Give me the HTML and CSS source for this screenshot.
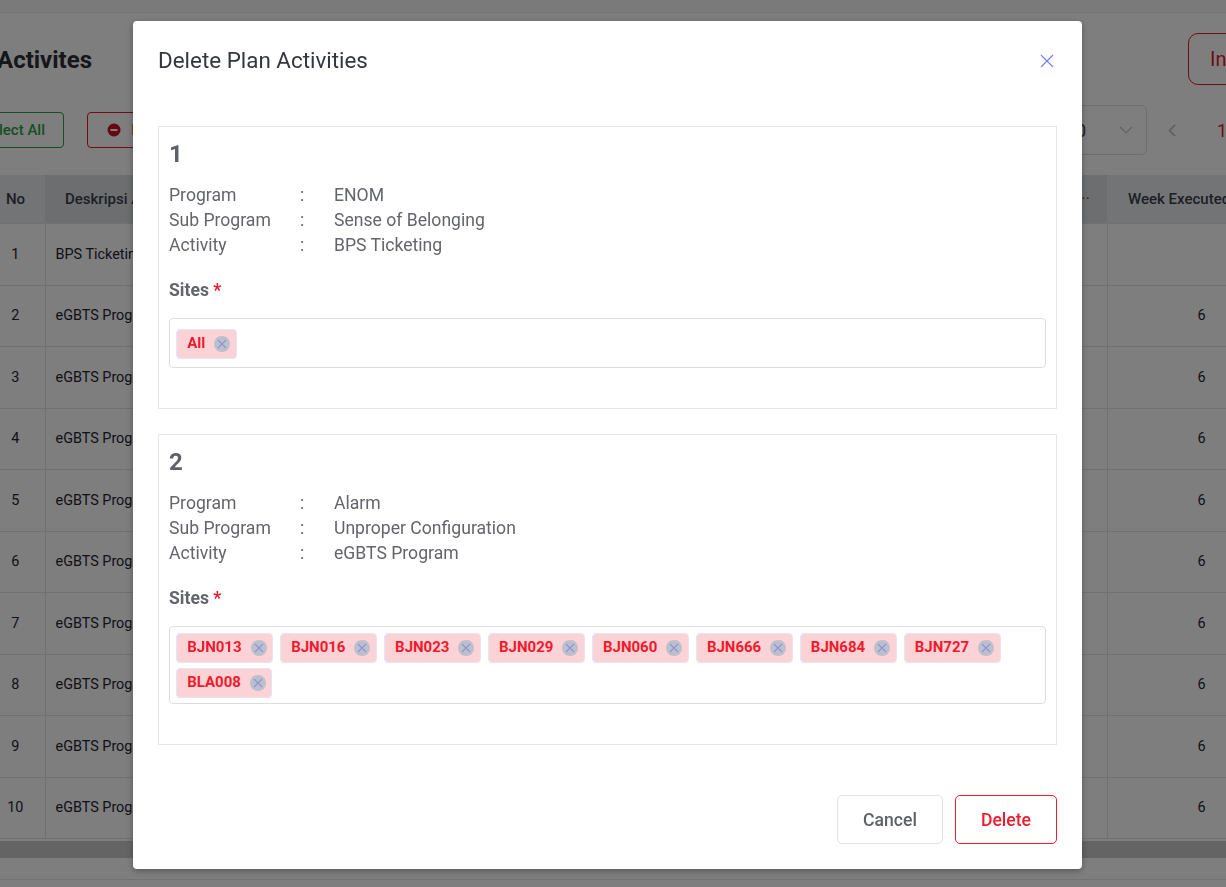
FILE: index.html
```html
<!DOCTYPE html>
<html lang="en">
<head>
    <meta charset="UTF-8">
    <meta name="viewport" content="width=device-width, initial-scale=1.0">
    <title>Delete Plan Activities</title>
    <link rel="stylesheet" href="styles.css">
</head>
<body>
    <div class="page">
        <div class="topbar"></div>
        <div class="page-head">
            <h1>Activites</h1>
            <button class="btn-import" type="button">Input</button>
        </div>
        <div class="toolbar">
            <div class="toolbar-left">
                <button class="btn-select" type="button">Select All</button>
                <button class="btn-delete-all" type="button">
                    <svg width="14" height="14" viewBox="0 0 14 14"><circle cx="7" cy="7" r="6.5" fill="#c8141c"/><rect x="3.5" y="6" width="7" height="2" fill="#fdfdfd"/></svg>
                    Delete
                </button>
            </div>
            <div class="toolbar-right">
                <div class="page-size">
                    <span>10</span>
                    <svg width="14" height="8" viewBox="0 0 14 8" fill="none" stroke="#c4c5c8" stroke-width="1.2"><path d="M1 1l6 6 6-6"/></svg>
                </div>
                <svg class="prev" width="8" height="13" viewBox="0 0 8 13" fill="none" stroke="#b4b6ba" stroke-width="1.5"><path d="M7 1L1.5 6.5 7 12"/></svg>
                <span class="page-num">1</span>
            </div>
        </div>

        <table class="plan-table">
            <colgroup>
                <col class="col-no">
                <col class="col-desc">
                <col class="col-mid">
                <col class="col-week">
            </colgroup>
            <thead>
                <tr>
                    <th class="th-light">No</th>
                    <th>Deskripsi Activity</th>
                    <th class="th-more">• •</th>
                    <th class="th-light th-week">Week Executed</th>
                </tr>
            </thead>
            <tbody>
                <tr><td class="c">1</td><td>BPS Ticketing</td><td></td><td class="week"></td></tr>
                <tr><td class="c">2</td><td>eGBTS Program</td><td></td><td class="week">6</td></tr>
                <tr><td class="c">3</td><td>eGBTS Program</td><td></td><td class="week">6</td></tr>
                <tr><td class="c">4</td><td>eGBTS Program</td><td></td><td class="week">6</td></tr>
                <tr><td class="c">5</td><td>eGBTS Program</td><td></td><td class="week">6</td></tr>
                <tr><td class="c">6</td><td>eGBTS Program</td><td></td><td class="week">6</td></tr>
                <tr><td class="c">7</td><td>eGBTS Program</td><td></td><td class="week">6</td></tr>
                <tr><td class="c">8</td><td>eGBTS Program</td><td></td><td class="week">6</td></tr>
                <tr><td class="c">9</td><td>eGBTS Program</td><td></td><td class="week">6</td></tr>
                <tr><td class="c">10</td><td>eGBTS Program</td><td></td><td class="week">6</td></tr>
            </tbody>
        </table>
        <div class="scrollbar"></div>
        <div class="bottom-line"></div>
    </div>

    <div class="overlay"></div>

    <div class="modal">
        <div class="modal-head">
            <h2>Delete Plan Activities</h2>
            <svg class="close" width="14" height="14" viewBox="0 0 14 14" fill="none" stroke="#6f7cf0" stroke-width="1.1"><path d="M1 1l12 12M13 1L1 13"/></svg>
        </div>

        <div class="card card-first">
            <h3>1</h3>
            <div class="info"><span>Program</span><span>:</span><span>ENOM</span></div>
            <div class="info"><span>Sub Program</span><span>:</span><span>Sense of Belonging</span></div>
            <div class="info"><span>Activity</span><span>:</span><span>BPS Ticketing</span></div>
            <div class="sites-label">Sites <em>*</em></div>
            <div class="tag-box">
                <span class="tag">All<i class="tag-x"><svg width="10" height="10" viewBox="0 0 10 10" fill="none" stroke="#8a93dc" stroke-width="1.1"><path d="M1 1l8 8M9 1L1 9"/></svg></i></span>
            </div>
        </div>

        <div class="card">
            <h3>2</h3>
            <div class="info"><span>Program</span><span>:</span><span>Alarm</span></div>
            <div class="info"><span>Sub Program</span><span>:</span><span>Unproper Configuration</span></div>
            <div class="info"><span>Activity</span><span>:</span><span>eGBTS Program</span></div>
            <div class="sites-label">Sites <em>*</em></div>
            <div class="tag-box">
                <span class="tag">BJN013<i class="tag-x"><svg width="10" height="10" viewBox="0 0 10 10" fill="none" stroke="#8a93dc" stroke-width="1.1"><path d="M1 1l8 8M9 1L1 9"/></svg></i></span>
                <span class="tag">BJN016<i class="tag-x"><svg width="10" height="10" viewBox="0 0 10 10" fill="none" stroke="#8a93dc" stroke-width="1.1"><path d="M1 1l8 8M9 1L1 9"/></svg></i></span>
                <span class="tag">BJN023<i class="tag-x"><svg width="10" height="10" viewBox="0 0 10 10" fill="none" stroke="#8a93dc" stroke-width="1.1"><path d="M1 1l8 8M9 1L1 9"/></svg></i></span>
                <span class="tag">BJN029<i class="tag-x"><svg width="10" height="10" viewBox="0 0 10 10" fill="none" stroke="#8a93dc" stroke-width="1.1"><path d="M1 1l8 8M9 1L1 9"/></svg></i></span>
                <span class="tag">BJN060<i class="tag-x"><svg width="10" height="10" viewBox="0 0 10 10" fill="none" stroke="#8a93dc" stroke-width="1.1"><path d="M1 1l8 8M9 1L1 9"/></svg></i></span>
                <span class="tag">BJN666<i class="tag-x"><svg width="10" height="10" viewBox="0 0 10 10" fill="none" stroke="#8a93dc" stroke-width="1.1"><path d="M1 1l8 8M9 1L1 9"/></svg></i></span>
                <span class="tag">BJN684<i class="tag-x"><svg width="10" height="10" viewBox="0 0 10 10" fill="none" stroke="#8a93dc" stroke-width="1.1"><path d="M1 1l8 8M9 1L1 9"/></svg></i></span>
                <span class="tag">BJN727<i class="tag-x"><svg width="10" height="10" viewBox="0 0 10 10" fill="none" stroke="#8a93dc" stroke-width="1.1"><path d="M1 1l8 8M9 1L1 9"/></svg></i></span>
                <span class="tag">BLA008<i class="tag-x"><svg width="10" height="10" viewBox="0 0 10 10" fill="none" stroke="#8a93dc" stroke-width="1.1"><path d="M1 1l8 8M9 1L1 9"/></svg></i></span>
            </div>
        </div>

        <div class="modal-foot">
            <button class="btn-cancel" type="button">Cancel</button>
            <button class="btn-delete" type="button">Delete</button>
        </div>
    </div>
</body>
</html>
```

FILE: styles.css
```css
html, body {
    margin: 0;
    height: 100%;
    overflow: hidden;
}
body {
    font-family: Roboto, "Liberation Sans", sans-serif;
    background-color: #fff;
    color: #1f2430;
}
button {
    font-family: inherit;
    background: none;
    cursor: pointer;
}

/* page behind the dialog */
.page {
    width: 1226px;
    height: 887px;
    overflow: hidden;
    background-color: #fdfdfd;
}
.topbar {
    height: 12px;
    background-color: #f4f4f5;
    border-bottom: 1px solid #e6e6e8;
}
.page-head {
    height: 92px;
    display: flex;
    justify-content: space-between;
    align-items: flex-start;
}
.page-head h1 {
    margin: 32px 0 0 -3px;
    font-size: 24px;
    line-height: 30px;
    font-weight: 700;
    color: #2b2f36;
}
.btn-import {
    margin: 20px -40px 0 0;
    width: 78px;
    height: 52px;
    border: 1px solid #e01b24;
    border-radius: 10px;
    color: #e01b24;
    font-size: 20px;
    text-align: left;
    padding-left: 21px;
}
.toolbar {
    height: 70px;
    display: flex;
    justify-content: space-between;
    align-items: flex-start;
}
.toolbar-left {
    display: flex;
    gap: 23px;
    padding-top: 7px;
}
.btn-select {
    margin-left: -30px;
    width: 94px;
    height: 36px;
    border: 1px solid #2f9e44;
    border-radius: 4px;
    color: #2f9e44;
    font-size: 15px;
    font-weight: 500;
    text-align: right;
    padding: 0 18px 0 0;
    white-space: nowrap;
}
.btn-delete-all {
    width: 120px;
    height: 36px;
    display: flex;
    align-items: center;
    gap: 10px;
    border: 1px solid #e01b24;
    border-radius: 4px;
    color: #d9822b;
    font-size: 15px;
    padding: 0 0 0 19px;
}
.toolbar-right {
    display: flex;
    align-items: center;
    height: 50px;
}
.page-size {
    width: 90px;
    height: 48px;
    display: flex;
    justify-content: flex-end;
    align-items: center;
    gap: 33px;
    padding-right: 13px;
    border: 1px solid #dcdcde;
    border-radius: 6px;
    font-size: 18px;
    color: #3a3f4a;
}
.prev {
    margin-left: 21px;
}
.page-num {
    margin-left: 41px;
    width: 9px;
    color: #e01b24;
    font-size: 18px;
}

.plan-table {
    table-layout: fixed;
    width: 1290px;
    border-collapse: collapse;
    font-size: 14.4px;
}
.col-no { width: 45px; }
.col-desc { width: 400px; }
.col-mid { width: 662px; }
.col-week { width: 183px; }
.plan-table th {
    height: 48px;
    padding: 0 10px;
    font-weight: 500;
    font-size: 15px;
    background-color: #dbdcdf;
    color: #3a3f4a;
    text-align: left;
    border-bottom: 1px solid #e3e3e5;
    white-space: nowrap;
}
.plan-table th.th-light {
    background-color: #e7e8ea;
    text-align: center;
    padding: 0 14px 0 0;
}
.plan-table th.th-week {
    text-align: left;
    padding-left: 21px;
}
.plan-table th:nth-child(2) {
    padding-left: 20px;
}
.plan-table th.th-more {
    text-align: right;
    font-size: 7px;
    padding-right: 18px;
}
.plan-table td {
    height: 60.5px;
    padding: 0 10px;
    border: 1px solid #e3e3e5;
    border-top: 0;
    border-left: 0;
    white-space: nowrap;
}
.plan-table td.c {
    text-align: center;
    padding: 0 14px 0 0;
}
.plan-table td.week {
    text-align: left;
    padding-left: 90px;
    border-right: 0;
}
.scrollbar {
    margin-top: 2px;
    height: 17px;
    background-color: #c8c8c8;
}
.bottom-line {
    margin-top: 21px;
    border-top: 1px solid #e6e6e8;
}

.overlay {
    position: fixed;
    inset: 0;
    background-color: rgba(0, 0, 0, 0.5);
}

/* dialog */
.modal {
    position: absolute;
    top: 21px;
    left: 133px;
    width: 949px;
    height: 848px;
    box-sizing: border-box;
    padding: 0 25px;
    background-color: white;
    border-radius: 4px;
    box-shadow: 0 2px 6px rgba(0, 0, 0, 0.3);
    color: #63656b;
}
.modal-head {
    height: 105px;
    display: flex;
    justify-content: space-between;
    align-items: flex-start;
}
.modal-head h2 {
    margin: 24px 0 0;
    font-size: 22.4px;
    line-height: 30px;
    font-weight: 400;
    color: #34373d;
}
.close {
    margin: 33px 3px 0 0;
}
.card {
    box-sizing: border-box;
    height: 311px;
    padding: 10px;
    border: 1px solid #e6e6ea;
}
.card-first {
    height: 283px;
    margin-bottom: 25px;
}
.card h3 {
    margin: 0 0 12px;
    font-size: 24px;
    line-height: 34px;
    font-weight: 700;
    color: #5e6168;
}
.info {
    display: grid;
    grid-template-columns: 131px 34px 1fr;
    font-size: 17.6px;
    line-height: 25px;
}
.sites-label {
    margin-top: 20px;
    font-size: 17.6px;
    line-height: 25px;
    font-weight: 700;
}
.sites-label em {
    font-style: normal;
    font-weight: 700;
    color: #f01a2c;
}
.tag-box {
    margin-top: 15px;
    box-sizing: border-box;
    min-height: 50px;
    display: flex;
    flex-wrap: wrap;
    gap: 5px 7px;
    padding: 10px 6px 5px;
    border: 1px solid #dcdce6;
    border-radius: 4px;
}
.card:not(.card-first) .tag-box {
    padding-top: 6px;
}
.tag {
    height: 30px;
    box-sizing: border-box;
    display: inline-flex;
    align-items: center;
    gap: 9px;
    padding: 0 5.4px 2px 10.2px;
    background-color: #fbd2d5;
    border: 1px solid #e4e4f6;
    border-radius: 4px;
    color: #f01a2c;
    font-size: 15px;
    font-weight: 700;
}
.tag-x {
    width: 16px;
    height: 16px;
    margin-top: 2px;
    display: flex;
    align-items: center;
    justify-content: center;
    border-radius: 50%;
    background-color: #bcc0cc;
}
.modal-foot {
    margin-top: 50px;
    display: flex;
    justify-content: flex-end;
    gap: 12px;
}
.modal-foot button {
    height: 49px;
    font-size: 17.6px;
    font-weight: 500;
    border-radius: 5px;
}
.btn-cancel {
    width: 106px;
    border: 1px solid #e0e0e6;
    color: #5e6168;
}
.btn-delete {
    width: 102px;
    border: 1px solid #ee1c2e;
    color: #ee1c2e;
}
```
